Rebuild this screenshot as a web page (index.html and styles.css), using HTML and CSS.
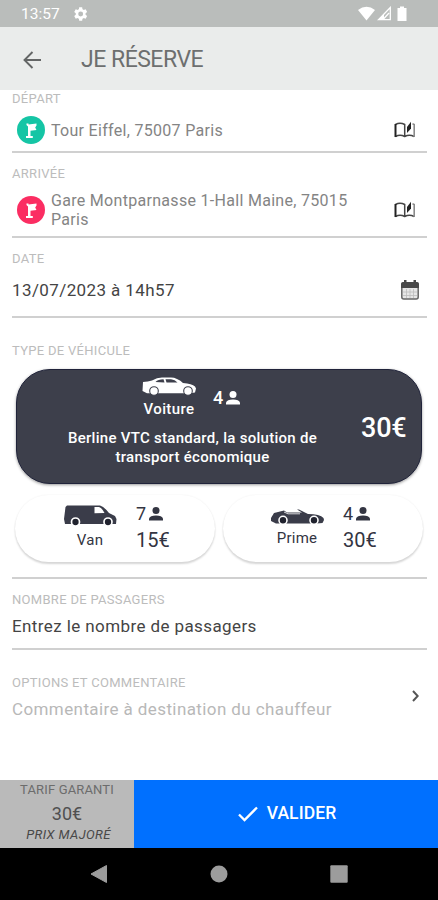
FILE: index.html
```html
<!DOCTYPE html>
<html lang="fr">
<head>
<meta charset="utf-8">
<title>Je réserve</title>
<link rel="stylesheet" href="styles.css">
</head>
<body>
<svg class="defs" aria-hidden="true">
  <symbol id="flag" viewBox="0 0 28 28"><path d="M9.500 7.500h2V8.500l8-1v2l-1.300 2 1.300 2.500-6 .7v5.300h2.300v2H9v-2h2v-9.500L9.500 9z" fill="#fff"/></symbol>
  <symbol id="book" viewBox="0 0 22 18"><path d="M10.700 15V3.500Q6 .8 1.500 3.500M1.500 15.500Q6 13 10.700 15.500 15.500 13 20 15.500" fill="none" stroke="#444" stroke-width="1.500"/><path d="M1.500 16V3" stroke="#222" stroke-width="2"/><path d="M20.200 16V3.500L18.500 2.800" fill="none" stroke="#8a8a8a" stroke-width="1.600"/><path d="M13 6L17 .8v6.700L13 12z" fill="#222"/></symbol>
  <symbol id="person" viewBox="0 0 14 14"><circle cx="7" cy="3.500" r="3.500" fill="currentColor"/><path d="M0 13.500v-2Q1 8.500 7 8.500t7 3v2z" fill="currentColor"/></symbol>
</svg>
<div class="screen">
  <header class="status">
    <span class="clock">13:57</span>
    <svg class="gear" viewBox="0 0 24 24"><path fill="#fff" fill-rule="evenodd" d="M19.400 13a7.500 7.500 0 0 0 0-2l2.100-1.700-2-3.500-2.500 1a7.500 7.500 0 0 0-1.700-1L14.900 3h-4l-.4 2.800a7.500 7.500 0 0 0-1.700 1l-2.500-1-2 3.500L6.400 11a7.500 7.500 0 0 0 0 2l-2.100 1.700 2 3.500 2.500-1a7.500 7.500 0 0 0 1.700 1l.4 2.800h4l.4-2.800a7.500 7.500 0 0 0 1.700-1l2.500 1 2-3.500zM12.900 15.300a3.300 3.300 0 1 1 0-6.600 3.300 3.300 0 0 1 0 6.600z"/></svg>
    <svg class="signals" viewBox="0 0 50 16"><path d="M0 4Q8.500-2.500 17 4L8.500 14.500z" fill="#fff"/><path d="M20.500 13.700L32.300 1.500v12.200zM25 13.500l6-6.500" fill="none" stroke="#fff" stroke-width="1.300"/><path d="M20 14l6-6v6z" fill="#fff"/><path d="M42 .5h4v1.500h2.500V15h-9V2H42z" fill="#fff"/></svg>
  </header>
  <div class="appbar">
    <svg class="back" viewBox="0 0 18 18"><path d="M9.500 1L1.500 9l8 8M1.500 9H18" fill="none" stroke="#646666" stroke-width="1.900"/></svg>
    <h1>JE RÉSERVE</h1>
  </div>
  <main>
    <section class="field depart">
      <div class="label">DÉPART</div>
      <div class="place">
        <svg class="pin green"><use href="#flag"/></svg>
        <span class="address">Tour Eiffel, 75007 Paris</span>
        <svg class="book"><use href="#book"/></svg>
      </div>
    </section>
    <section class="field arrivee">
      <div class="label">ARRIVÉE</div>
      <div class="place">
        <svg class="pin red"><use href="#flag"/></svg>
        <span class="address">Gare Montparnasse 1-Hall Maine, 75015<br>Paris</span>
        <svg class="book"><use href="#book"/></svg>
      </div>
    </section>
    <section class="field date">
      <div class="label">DATE</div>
      <div class="daterow">
        <span class="value">13/07/2023 à 14h57</span>
        <svg class="calendar" viewBox="0 0 18 20"><rect x=".8" y="3" width="16.400" height="16" rx="2" fill="#e6e6e6" stroke="#666" stroke-width="1.500"/><path d="M0 8V4q0-2 2-2h1V0h2.500v2h7V0H15v2h1q2 0 2 2v4z" fill="#484848"/><path d="M2 12h14M2 15.500h14M5.500 9v9M9 9v9M12.500 9v9" stroke="#bdbdbd" stroke-width=".8"/></svg>
      </div>
    </section>
    <section class="field vehicle">
      <div class="label">TYPE DE VÉHICULE</div>
      <div class="card">
        <div class="info">
          <div class="summary">
            <div class="car">
              <svg class="sedan" viewBox="0 0 54 19"><path fill="#fff" d="M1 5Q6 4.500 10 3.500 15 .5 20 .5h9Q35 .5 41 6q9 .5 12 3.500l1 2-1 4-5 .8H5L.5 14z"/><path fill="#3d3f4b" d="M13.500 5Q16 2.300 21.500 2.200l1 3.300zM23.500 2.200H29q4 .3 6.500 3.300H24.500z"/><g fill="#fff" stroke="#3d3f4b" stroke-width="1.100"><circle cx="12" cy="14" r="4.300"/><circle cx="46" cy="14" r="4.300"/></g></svg>
              <span class="name">Voiture</span>
            </div>
            <div class="seats">4<svg class="person"><use href="#person"/></svg></div>
          </div>
          <p class="desc">Berline VTC standard, la solution de<br>transport économique</p>
        </div>
        <div class="price">30€</div>
      </div>
      <div class="pills">
        <div class="pill van">
          <div class="model">
            <svg class="vanicon" viewBox="0 0 53 22"><path fill="#3a3c49" d="M3 .5h33Q40 1.500 45 8l6 3 1.500 3-.5 5H1L0 14 1.500 2z"/><path fill="#fff" d="M30.500 2H35q3 1 5.500 6l-10 .3z"/><g fill="#20222e" stroke="#fff" stroke-width="1.700"><circle cx="11.500" cy="17" r="4"/><circle cx="44" cy="17" r="4"/></g></svg>
            <span class="name">Van</span>
          </div>
          <div class="offer"><div class="seats">7<svg class="person"><use href="#person"/></svg></div><div class="fare">15€</div></div>
        </div>
        <div class="pill prime">
          <div class="model">
            <svg class="sport" viewBox="0 0 53 16"><path fill="#3a3c49" d="M0 9l3-5 10-2.500 3 2h15L26 .5h2L37 5q12 0 15.500 4l.5 2-1.500 3-6 .5H5L0 12z"/><path stroke="#fff" stroke-width=".8" d="M13 3l4 1.800h12" fill="none"/><g fill="#20222e" stroke="#fff" stroke-width="1.600"><circle cx="12" cy="11.300" r="4"/><circle cx="43" cy="11.300" r="4"/></g></svg>
            <span class="name">Prime</span>
          </div>
          <div class="offer"><div class="seats">4<svg class="person"><use href="#person"/></svg></div><div class="fare">30€</div></div>
        </div>
      </div>
    </section>
    <section class="field passengers">
      <div class="label">NOMBRE DE PASSAGERS</div>
      <div class="value">Entrez le nombre de passagers</div>
    </section>
    <section class="options">
      <div>
        <div class="label">OPTIONS ET COMMENTAIRE</div>
        <div class="value muted">Commentaire à destination du chauffeur</div>
      </div>
      <svg class="chevron" viewBox="0 0 7 12"><path d="M1 1l4.700 5L1 11" fill="none" stroke="#555" stroke-width="2"/></svg>
    </section>
  </main>
  <footer>
    <div class="tarif">
      <div class="t-label">TARIF GARANTI</div>
      <div class="t-price">30€</div>
      <div class="t-note">PRIX MAJORÉ</div>
    </div>
    <div class="submit">
      <svg class="check" viewBox="0 0 20 16"><path d="M1 8.500l5.500 5.500L19 1.500" fill="none" stroke="#fff" stroke-width="2.300"/></svg>
      <span>VALIDER</span>
    </div>
  </footer>
  <nav>
    <svg viewBox="0 0 18 18"><path d="M1 9L16.500.5v17z" fill="#9c9c9c" stroke="#9c9c9c" stroke-linejoin="round"/></svg>
    <svg viewBox="0 0 18 18"><circle cx="9" cy="9" r="8.500" fill="#9c9c9c"/></svg>
    <svg viewBox="0 0 18 18"><rect x=".3" y=".3" width="17.400" height="17.400" rx="1" fill="#9c9c9c"/></svg>
  </nav>
</div>
</body>
</html>
```

FILE: styles.css
```css
* { box-sizing: border-box; }
body { margin: 0; background: #fff; font-family: Roboto, "Liberation Sans", sans-serif; }
svg { display: block; flex: none; }
.defs { display: none; }
.screen { width: 438px; height: 900px; overflow: hidden; display: flex; flex-direction: column; white-space: nowrap; }

.status { height: 27px; background: #babdbb; display: flex; align-items: center; padding: 1px 30px 0 21px; color: #fff; }
.clock { font-size: 15.500px; width: 50px; }
.gear { width: 18px; height: 18px; }
.signals { width: 50px; height: 16px; margin-left: auto; }
.appbar { height: 63px; background: #eaeceb; display: flex; align-items: center; padding: 2px 0 0 23px; }
.back { width: 18px; height: 18px; }
h1 { margin: 0 0 0 40px; font-size: 23px; font-weight: 400; color: #6d6f6f; letter-spacing: -.5px; }

main { height: 690px; padding: 0 11px 0 12px; }
.field { border-bottom: 2px solid #d0d0d0; }
.label { height: 18px; line-height: 18px; font-size: 13px; letter-spacing: .3px; color: #bcbcbc; }
.value { font-size: 17px; line-height: 20px; letter-spacing: .4px; color: #444; }
.depart { height: 63px; }
.arrivee { height: 85px; padding-top: 12px; }
.place { display: flex; align-items: center; height: 44px; padding: 0 11px 0 5px; }
.arrivee .place { height: 53px; }
.pin { width: 28px; height: 28px; border-radius: 50%; }
.green { background: #15c5a5; }
.red { background: #fb2d62; }
.address { margin-left: 6px; font-size: 16px; line-height: 19px; letter-spacing: .3px; color: #848484; }
.book { width: 22px; height: 18px; margin-left: auto; }
.date { height: 80px; padding-top: 12px; }
.daterow { display: flex; align-items: center; justify-content: space-between; height: 43px; padding-right: 8px; }
.calendar { width: 18px; height: 20px; }

.vehicle { height: 261px; padding-top: 24px; }
.card { height: 115px; margin: 9px 5px 0 4px; border-radius: 34px; background: #3d3f4b; border: 1px solid #20233a; box-shadow: 0 1px 3px #999; color: #fff; display: flex; }
.info { width: 351px; }
.summary { display: flex; height: 52px; padding: 7px 0 0 125px; }
.car { width: 54px; display: flex; flex-direction: column; align-items: center; }
.sedan { width: 54px; height: 19px; }
.name { font-size: 15px; line-height: 18px; letter-spacing: .2px; }
.car .name { font-weight: 500; margin-top: 4px; letter-spacing: .4px; }
.seats { display: flex; align-items: center; font-size: 18px; line-height: 20px; height: 20px; }
.summary .seats { margin: 11px 0 0 17px; font-weight: 500; }
.person { width: 14px; height: 14px; margin-left: 3px; }
.desc { margin: 7px 0 0; text-align: center; font-size: 15px; line-height: 19px; font-weight: 500; letter-spacing: .28px; }
.price { font-size: 27px; font-weight: 500; line-height: 32px; padding-top: 42px; margin-left: -7px; letter-spacing: -.2px; }
.pills { display: flex; gap: 8px; margin: 11px 3px 0; }
.pill { width: 200px; height: 67px; border-radius: 34px; box-shadow: 0 2px 2px #d6d6d6, 0 0 2px #eee; color: #333542; display: flex; }
.van { padding: 9px 0 0 48px; }
.prime { padding: 9px 0 0 47px; }
.model { width: 54px; display: flex; flex-direction: column; align-items: center; }
.vanicon { width: 53px; height: 22px; margin-top: 1px; }
.sport { width: 53px; height: 16px; margin-top: 5px; }
.van .name { margin-top: 4px; }
.prime .name { margin-top: 4px; }
.offer { margin-left: 19px; }
.fare { font-size: 20px; line-height: 26px; margin-top: 3px; }

.passengers { height: 71px; padding-top: 12px; }
.passengers .value { margin-top: 7px; }
.options { padding: 24px 8px 0 0; display: flex; justify-content: space-between; }
.options .value { margin-top: 7px; }
.options .muted { color: #b8b8b8; }
.chevron { width: 7px; height: 12px; margin-top: 16px; }

footer { height: 68px; display: flex; }
.tarif { width: 134px; background: #bababa; text-align: center; color: #6c6c6c; }
.t-label { font-size: 13px; line-height: 20px; letter-spacing: .15px; }
.t-price { font-size: 18px; line-height: 24px; margin-top: 2px; color: #505050; }
.t-note { font-size: 13px; line-height: 18px; margin-left: 3px; letter-spacing: .4px; font-style: italic; color: #484848; }
.submit { width: 304px; background: #0070ff; color: #fff; display: flex; align-items: center; justify-content: center; gap: 9px; font-size: 17.500px; font-weight: 500; padding-left: 2px; }
.submit span { margin-top: -2px; letter-spacing: .1px; }
.check { width: 20px; height: 16px; }
nav { height: 52px; background: #000; display: flex; align-items: center; gap: 102px; padding-left: 90px; }
nav svg { width: 18px; height: 18px; }
```
